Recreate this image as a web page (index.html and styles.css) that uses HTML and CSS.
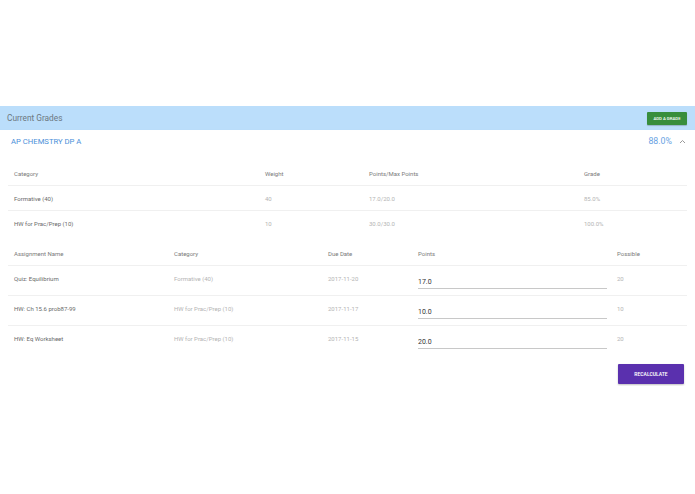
FILE: index.html
```html
<!DOCTYPE html>
<html lang="en">
<head>
    <meta charset="UTF-8">
    <meta name="viewport" content="width=device-width, initial-scale=1.0">
    <title>Current Grades</title>
    <link rel="stylesheet" href="styles.css">
</head>
<body>
    <div class="page">
        <div class="toolbar">
            <span class="toolbar-title">Current Grades</span>
            <button class="add-btn">Add a grade</button>
        </div>

        <div class="panel">
            <div class="panel-header">
                <span class="course">AP CHEMSTRY DP A</span>
                <span class="course-grade">
                    88.0%
                    <svg class="chevron" width="7" height="5" viewBox="0 0 7 5">
                        <polyline points="1,4 3.5,1.5 6,4" fill="none" stroke="#999" stroke-width="1"/>
                    </svg>
                </span>
            </div>

            <div class="panel-body">
                <table class="grid categories">
                    <thead>
                        <tr>
                            <th>Category</th>
                            <th>Weight</th>
                            <th>Points/Max Points</th>
                            <th>Grade</th>
                        </tr>
                    </thead>
                    <tbody>
                        <tr>
                            <td>Formative (40)</td>
                            <td>40</td>
                            <td>17.0/20.0</td>
                            <td>85.0%</td>
                        </tr>
                        <tr>
                            <td>HW for Prac/Prep (10)</td>
                            <td>10</td>
                            <td>30.0/30.0</td>
                            <td>100.0%</td>
                        </tr>
                    </tbody>
                </table>

                <table class="grid assignments">
                    <thead>
                        <tr>
                            <th>Assignment Name</th>
                            <th>Category</th>
                            <th>Due Date</th>
                            <th>Points</th>
                            <th>Possible</th>
                        </tr>
                    </thead>
                    <tbody>
                        <tr>
                            <td>Quiz: Equilibrium</td>
                            <td>Formative (40)</td>
                            <td>2017-11-20</td>
                            <td class="points"><input type="text" value="17.0"></td>
                            <td>20</td>
                        </tr>
                        <tr>
                            <td>HW: Ch 15.6 prob87-99</td>
                            <td>HW for Prac/Prep (10)</td>
                            <td>2017-11-17</td>
                            <td class="points"><input type="text" value="10.0"></td>
                            <td>10</td>
                        </tr>
                        <tr>
                            <td>HW: Eq Worksheet</td>
                            <td>HW for Prac/Prep (10)</td>
                            <td>2017-11-15</td>
                            <td class="points"><input type="text" value="20.0"></td>
                            <td>20</td>
                        </tr>
                    </tbody>
                </table>

                <div class="actions">
                    <button class="recalc-btn">Recalculate</button>
                </div>
            </div>
        </div>
    </div>
</body>
</html>
```

FILE: styles.css
```css
body {
    margin: 0;
    background: #fff;
    font-family: Roboto, "Liberation Sans", Arial, sans-serif;
}
.page {
    padding-top: 106px;
}
.toolbar {
    height: 24px;
    background-color: #bbdefb;
    display: flex;
    align-items: center;
    justify-content: space-between;
    padding: 0 8px 0 7px;
}
.toolbar-title {
    font-size: 8.3px;
    color: #6b7780;
}
.add-btn {
    width: 40px;
    height: 13px;
    padding: 0;
    border: none;
    border-radius: 1px;
    background-color: #388e3c;
    color: #fff;
    font-family: inherit;
    font-size: 4.3px;
    font-weight: 500;
    text-transform: uppercase;
    box-shadow: 0 1px 1px rgba(0, 0, 0, 0.2);
}
.panel {
    box-shadow: 0 1px 2px rgba(0, 0, 0, 0.08);
    padding-bottom: 2px;
}
.panel-header {
    height: 22px;
    display: flex;
    align-items: center;
    justify-content: space-between;
    padding: 0 9px 0 11px;
}
.course {
    font-size: 7.7px;
    color: #4a8fd9;
}
.course-grade {
    display: flex;
    align-items: center;
    font-size: 8.8px;
    color: #6aa3e3;
}
.chevron {
    margin-left: 7px;
}
.panel-body {
    padding: 9px 8px 0 8px;
}
.grid {
    width: 679px;
    border-collapse: separate;
    border-spacing: 0;
    table-layout: fixed;
    font-size: 6px;
}
.grid th,
.grid td {
    box-sizing: border-box;
    padding: 0 6px;
    text-align: left;
}
.grid th {
    height: 25px;
    font-weight: 400;
    color: #7a7a7a;
    border-bottom: 1px solid #f0f0f0;
}
.grid td {
    color: #b4b4b4;
}
.grid td:first-child {
    color: #6a6a6a;
}
.categories td {
    height: 25px;
    border-bottom: 1px solid #f0f0f0;
}
.categories tbody tr:last-child td {
    border-bottom: none;
}
.categories th:nth-child(1) { width: 251px; }
.categories th:nth-child(2) { width: 104px; }
.categories th:nth-child(3) { width: 215px; }
.assignments {
    margin-top: 5px;
}
.assignments th:nth-child(1) { width: 160px; }
.assignments th:nth-child(2) { width: 154px; }
.assignments th:nth-child(3) { width: 90px; }
.assignments th:nth-child(4) { width: 199px; }
.assignments td {
    height: 30px;
    vertical-align: top;
    padding-top: 9px;
    line-height: 8px;
    border-bottom: 1px solid #f0f0f0;
}
.assignments tbody tr:last-child td {
    border-bottom: none;
}
.assignments td.points {
    padding-top: 10px;
    padding-right: 4px;
}
.points input {
    display: block;
    width: 100%;
    box-sizing: border-box;
    height: 13px;
    padding: 0;
    border: none;
    border-bottom: 1px solid #c8c8c8;
    font-family: inherit;
    font-size: 7px;
    color: #333;
    outline: none;
    background: transparent;
}
.actions {
    display: flex;
    justify-content: flex-end;
    padding: 8px 3px 0 0;
}
.recalc-btn {
    width: 66px;
    height: 20px;
    border: none;
    border-radius: 1px;
    background-color: #5a30ae;
    color: #fff;
    font-family: inherit;
    font-size: 5px;
    font-weight: 600;
    text-transform: uppercase;
    box-shadow: 0 1px 2px rgba(0, 0, 0, 0.25);
}
```
